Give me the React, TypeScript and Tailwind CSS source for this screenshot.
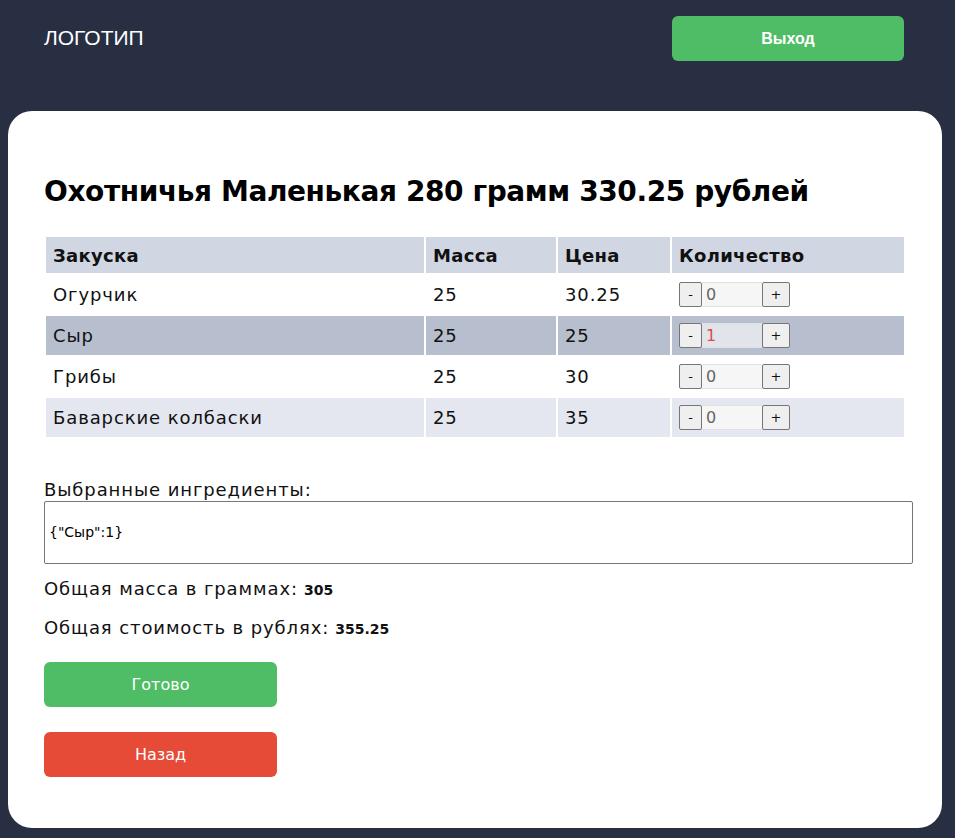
import { useState } from 'react';

const SNACKS = [
  { name: 'Огурчик', mass: 25, price: '30.25' },
  { name: 'Сыр', mass: 25, price: '25' },
  { name: 'Грибы', mass: 25, price: '30' },
  { name: 'Баварские колбаски', mass: 25, price: '35' },
];

const ROW_BG = ['bg-white', 'bg-[#b7bfcf]', 'bg-white', 'bg-[#e4e7ef]'];

const FONT = "font-['DejaVu_Sans',sans-serif]";

export default function App() {
  const [counts, setCounts] = useState<Record<string, number>>({ Сыр: 1 });

  const change = (name: string, d: number) =>
    setCounts((c) => ({ ...c, [name]: Math.max(0, (c[name] ?? 0) + d) }));

  return (
    <div className={`min-h-[838px] bg-[#282f42] pb-[10px] ${FONT}`}>
      {/* Header */}
      <header className="flex items-start justify-between pl-[44px] pr-[51px] pt-[16px] h-[111px]">
        <div className="text-white text-[21px] mt-[6px] font-['Liberation_Sans',sans-serif]">ЛОГОТИП</div>
        <button className="w-[232px] h-[45px] rounded-[6px] bg-[#4fbd65] text-white text-[16px] font-bold font-['Liberation_Sans',sans-serif]">
          Выход
        </button>
      </header>

      {/* Card */}
      <main className="ml-[8px] mr-[13px] rounded-[24px] bg-white pl-[36px] pr-[29px] pt-[64px] pb-[51px]">
        <h1 className="text-[28px] font-bold text-black leading-[34px] tracking-[-0.4px]">
          Охотничья Маленькая 280 грамм 330.25 рублей
        </h1>

        <table className="mt-[26px] w-[862px] border-separate border-spacing-[2px] text-[18px] tracking-[0.9px] text-[#111]">
          <thead>
            <tr className="bg-[#d0d6e2] h-[36px] text-left">
              <th className="w-[378px] px-[7px] font-bold tracking-[0.3px]">Закуска</th>
              <th className="w-[130px] px-[7px] font-bold tracking-[0.3px]">Масса</th>
              <th className="w-[112px] px-[7px] font-bold tracking-[0.3px]">Цена</th>
              <th className="px-[7px] font-bold tracking-[0.3px]">Количество</th>
            </tr>
          </thead>
          <tbody>
            {SNACKS.map((s, i) => {
              const n = counts[s.name] ?? 0;
              return (
                <tr key={s.name} className={`${ROW_BG[i]} h-[39px]`}>
                  <td className="px-[7px]">{s.name}</td>
                  <td className="px-[7px]">{s.mass}</td>
                  <td className="px-[7px]">{s.price}</td>
                  <td className="px-[7px]">
                    <div className="flex items-center h-[25px] tracking-normal">
                      <button
                        onClick={() => change(s.name, -1)}
                        className="w-[23px] h-[25px] rounded-[2px] border border-[#767676] bg-[#efefef] text-[13px] leading-none"
                      >
                        -
                      </button>
                      <div
                        className={`w-[60px] h-[25px] flex items-center pl-[4px] text-[16px] border-y border-[#e0e0e0] ${
                          i === 1 ? 'bg-[#e1e4ea] text-[#e04b45]' : 'bg-[#f6f6f6] text-[#666]'
                        }`}
                      >
                        {n}
                      </div>
                      <button
                        onClick={() => change(s.name, 1)}
                        className="w-[28px] h-[25px] rounded-[2px] border border-[#767676] bg-[#efefef] text-[13px] leading-none"
                      >
                        +
                      </button>
                    </div>
                  </td>
                </tr>
              );
            })}
          </tbody>
        </table>

        <div className="mt-[40px] text-[18px] tracking-[0.9px] text-[#111] leading-[22px]">Выбранные ингредиенты:</div>
        <div className="mt-0 h-[63px] w-[869px] border border-[#767676] rounded-[2px] flex items-center pl-[4px] text-[14px] text-black">
          {'{"Сыр":1}'}
        </div>

        <div className="mt-[14px] text-[18px] tracking-[0.9px] text-[#111] leading-[22px] flex items-baseline gap-[6px]">
          Общая масса в граммах: <b className="text-[14px] tracking-normal">305</b>
        </div>
        <div className="mt-[16px] text-[18px] tracking-[0.9px] text-[#111] leading-[22px] flex items-baseline gap-[6px]">
          Общая стоимость в рублях: <b className="text-[14px] tracking-normal">355.25</b>
        </div>

        <div className="mt-[22px] flex flex-col gap-[25px]">
          <button className="w-[233px] h-[45px] rounded-[6px] bg-[#4fbd65] text-white text-[16px]">
            Готово
          </button>
          <button className="w-[233px] h-[45px] rounded-[6px] bg-[#e54b37] text-white text-[16px]">
            Назад
          </button>
        </div>
      </main>
    </div>
  );
}
